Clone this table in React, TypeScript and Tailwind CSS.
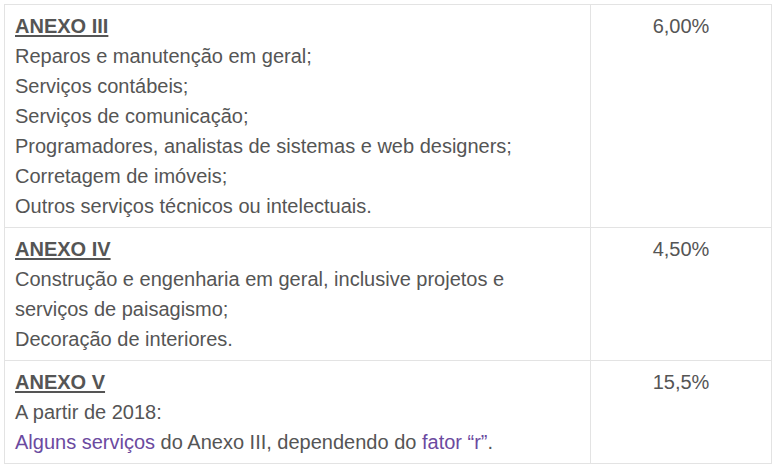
const rows = [
  {
    title: 'ANEXO III',
    rate: '6,00%',
    lines: [
      'Reparos e manutenção em geral;',
      'Serviços contábeis;',
      'Serviços de comunicação;',
      'Programadores, analistas de sistemas e web designers;',
      'Corretagem de imóveis;',
      'Outros serviços técnicos ou intelectuais.',
    ],
  },
  {
    title: 'ANEXO IV',
    rate: '4,50%',
    lines: [
      'Construção e engenharia em geral, inclusive projetos e',
      'serviços de paisagismo;',
      'Decoração de interiores.',
    ],
  },
]

export default function App() {
  return (
    <div className="bg-white w-[780px] h-[472px] p-[4px] font-['Liberation_Sans',Arial,sans-serif] text-[20px] leading-[30px] text-[#555]">
      <div className="w-[768px] border border-[#e3e3e3]">
        {rows.map((row) => (
          <div key={row.title} className="grid grid-cols-[586px_1fr] border-b border-[#e3e3e3]">
            <div className="border-r border-[#e3e3e3] pl-[10px] pt-[6px] pb-[6px]">
              <div className="font-bold underline underline-offset-[2px]">{row.title}</div>
              {row.lines.map((l) => (
                <div key={l}>{l}</div>
              ))}
            </div>
            <div className="text-center pt-[6px]">{row.rate}</div>
          </div>
        ))}
        <div className="grid grid-cols-[586px_1fr]">
          <div className="border-r border-[#e3e3e3] pl-[10px] pt-[6px] pb-[6px]">
            <div className="font-bold underline underline-offset-[2px]">ANEXO V</div>
            <div>A partir de 2018:</div>
            <div>
              <span className="text-[#6b4aa0]">Alguns serviços</span> do Anexo III, dependendo do{' '}
              <span className="text-[#6b4aa0]">fator “r”</span>.
            </div>
          </div>
          <div className="text-center pt-[6px]">15,5%</div>
        </div>
      </div>
    </div>
  )
}
